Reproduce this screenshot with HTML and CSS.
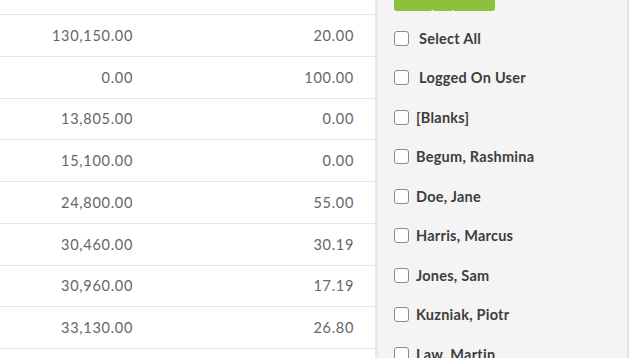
FILE: index.html
```html
<!DOCTYPE html>
<html lang="en">
<head>
<meta charset="utf-8">
<link rel="stylesheet" href="styles.css">
</head>
<body>
<div class="page">
  <div class="table">
    <div class="row top"></div>
    <div class="row"><span class="c1">130,150.00</span><span class="c2">20.00</span></div>
    <div class="row"><span class="c1">0.00</span><span class="c2">100.00</span></div>
    <div class="row"><span class="c1">13,805.00</span><span class="c2">0.00</span></div>
    <div class="row"><span class="c1">15,100.00</span><span class="c2">0.00</span></div>
    <div class="row"><span class="c1">24,800.00</span><span class="c2">55.00</span></div>
    <div class="row"><span class="c1">30,460.00</span><span class="c2">30.19</span></div>
    <div class="row"><span class="c1">30,960.00</span><span class="c2">17.19</span></div>
    <div class="row"><span class="c1">33,130.00</span><span class="c2">26.80</span></div>
    <div class="row last"></div>
  </div>
  <div class="panel">
    <div class="apply"><span>Apply</span></div>
    <ul class="list">
      <li class="item"><span class="box"></span><span class="label wide">Select All</span></li>
      <li class="item"><span class="box"></span><span class="label wide">Logged On User</span></li>
      <li class="item"><span class="box"></span><span class="label">[Blanks]</span></li>
      <li class="item"><span class="box"></span><span class="label">Begum, Rashmina</span></li>
      <li class="item"><span class="box"></span><span class="label">Doe, Jane</span></li>
      <li class="item"><span class="box"></span><span class="label">Harris, Marcus</span></li>
      <li class="item"><span class="box"></span><span class="label">Jones, Sam</span></li>
      <li class="item"><span class="box"></span><span class="label">Kuzniak, Piotr</span></li>
      <li class="item"><span class="box"></span><span class="label">Law, Martin</span></li>
    </ul>
  </div>
  <div class="edge"></div>
</div>
</body>
</html>
```
FILE: styles.css
```css
html, body {
  margin: 0;
  padding: 0;
  background: #ffffff;
  overflow: hidden;
}
body {
  font-family: Lato, "Open Sans", "Liberation Sans", sans-serif;
  width: 636px;
  height: 358px;
}
.page {
  display: flex;
  width: 636px;
  height: 358px;
  overflow: hidden;
}
.table {
  width: 375px;
  flex: none;
  display: flex;
  flex-direction: column;
}
.row {
  height: 41.75px;
  flex: none;
  box-sizing: border-box;
  border-bottom: 1.5px solid #e8e8e8;
  display: flex;
  align-items: center;
  font-size: 14.5px;
  letter-spacing: 0.7px;
  color: #666666;
}
.row.top {
  height: 15px;
}
.c1 {
  width: 133px;
  text-align: right;
}
.c2 {
  width: 221px;
  text-align: right;
}
.panel {
  width: 249px;
  flex: none;
  background: #f4f4f4;
  border-left: 3px solid #e9e9e9;
  border-right: 2px solid #e2e2e2;
  box-sizing: content-box;
  position: relative;
}
.edge {
  flex: 1;
  background: #ffffff;
}
.apply {
  margin-left: 16px;
  width: 101px;
  height: 11px;
  background: #8dc03f;
  border-radius: 0 0 3px 3px;
  color: #ffffff;
  font-size: 13px;
  overflow: hidden;
  display: flex;
  justify-content: center;
  align-items: flex-end;
}
.apply span {
  line-height: 1;
  transform: translateY(11px);
}
.list {
  list-style: none;
  margin: 0;
  padding: 19px 0 0 16px;
  display: flex;
  flex-direction: column;
  gap: 23.5px;
}
.item {
  display: flex;
  align-items: center;
  height: 16px;
}
.box {
  width: 13px;
  height: 13px;
  border: 1.5px solid #8a8a8a;
  border-radius: 3px;
  background: #ffffff;
  flex: none;
}
.label {
  margin-left: 7px;
  font-size: 14.5px;
  letter-spacing: 0.25px;
  font-weight: 700;
  color: #3d3d3d;
}
.label.wide {
  margin-left: 10px;
}
```
